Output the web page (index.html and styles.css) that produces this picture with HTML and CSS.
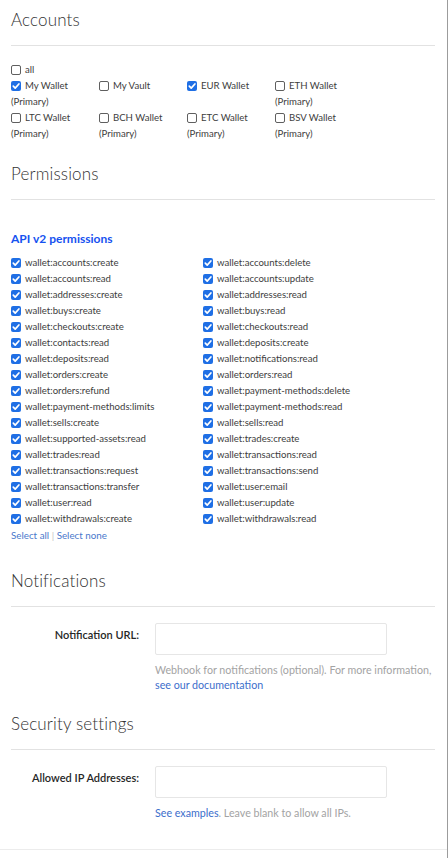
FILE: index.html
```html
<!DOCTYPE html>
<html lang="en">
<head>
<meta charset="utf-8">
<title>API key settings</title>
<link rel="stylesheet" href="styles.css">
</head>
<body>
<div class="page">
  <div class="content">
    <section class="section section-accounts">
      <h2 class="section-title">Accounts</h2>
      <hr class="rule">
      <div class="section-body">
        <div class="check-row"><span class="box"></span><span class="check-text">all</span></div>
        <div class="account-grid">
          <div class="check-row"><span class="box checked"><svg viewBox="0 0 10 10"><polyline points="2.3,5.2 4.2,7.1 7.9,3"/></svg></span><span class="check-text">My Wallet</span><span class="primary">(Primary)</span></div>
          <div class="check-row"><span class="box"></span><span class="check-text">My Vault</span></div>
          <div class="check-row"><span class="box checked"><svg viewBox="0 0 10 10"><polyline points="2.3,5.2 4.2,7.1 7.9,3"/></svg></span><span class="check-text">EUR Wallet</span></div>
          <div class="check-row"><span class="box"></span><span class="check-text">ETH Wallet</span><span class="primary">(Primary)</span></div>
          <div class="check-row"><span class="box"></span><span class="check-text">LTC Wallet</span><span class="primary">(Primary)</span></div>
          <div class="check-row"><span class="box"></span><span class="check-text">BCH Wallet</span><span class="primary">(Primary)</span></div>
          <div class="check-row"><span class="box"></span><span class="check-text">ETC Wallet</span><span class="primary">(Primary)</span></div>
          <div class="check-row"><span class="box"></span><span class="check-text">BSV Wallet</span><span class="primary">(Primary)</span></div>
        </div>
      </div>
    </section>

    <section class="section section-permissions">
      <h2 class="section-title">Permissions</h2>
      <hr class="rule">
      <div class="section-body">
        <h3 class="api-title">API v2 permissions</h3>
        <div class="perm-grid" id="perm-grid"></div>
        <div class="select-links"><a href="#">Select all</a> <span class="sep">|</span> <a href="#">Select none</a></div>
      </div>
    </section>

    <section class="section">
      <h2 class="section-title">Notifications</h2>
      <hr class="rule">
      <div class="section-body">
        <div class="form-row">
          <label class="form-label">Notification URL:</label>
          <div class="form-field">
            <div class="text-input"></div>
            <p class="help">Webhook for notifications (optional). For more information,<br><a href="#">see our documentation</a></p>
          </div>
        </div>
      </div>
    </section>

    <section class="section">
      <h2 class="section-title">Security settings</h2>
      <hr class="rule">
      <div class="section-body">
        <div class="form-row">
          <label class="form-label">Allowed IP Addresses:</label>
          <div class="form-field">
            <div class="text-input"></div>
            <p class="help"><a href="#">See examples</a>. Leave blank to allow all IPs.</p>
          </div>
        </div>
      </div>
    </section>
  </div>
  <div class="footer"></div>
</div>
<script src="app.js"></script>
</body>
</html>
```
FILE: app.js
```js
var perms = [
  "wallet:accounts:create","wallet:accounts:delete",
  "wallet:accounts:read","wallet:accounts:update",
  "wallet:addresses:create","wallet:addresses:read",
  "wallet:buys:create","wallet:buys:read",
  "wallet:checkouts:create","wallet:checkouts:read",
  "wallet:contacts:read","wallet:deposits:create",
  "wallet:deposits:read","wallet:notifications:read",
  "wallet:orders:create","wallet:orders:read",
  "wallet:orders:refund","wallet:payment-methods:delete",
  "wallet:payment-methods:limits","wallet:payment-methods:read",
  "wallet:sells:create","wallet:sells:read",
  "wallet:supported-assets:read","wallet:trades:create",
  "wallet:trades:read","wallet:transactions:read",
  "wallet:transactions:request","wallet:transactions:send",
  "wallet:transactions:transfer","wallet:user:email",
  "wallet:user:read","wallet:user:update",
  "wallet:withdrawals:create","wallet:withdrawals:read"
];
var grid = document.getElementById("perm-grid");
var html = "";
for (var i = 0; i < perms.length; i++) {
  html += '<div class="check-row"><span class="box checked"><svg viewBox="0 0 10 10"><polyline points="2.3,5.2 4.2,7.1 7.9,3"/></svg></span><span class="check-text">' + perms[i] + '</span></div>';
}
grid.innerHTML = html;
```
FILE: styles.css
```css
html, body {
  margin: 0;
  padding: 0;
  background: #ffffff;
}
body {
  font-family: Lato, "Open Sans", "Liberation Sans", sans-serif;
  color: #3a3a3a;
}
.page {
  width: 448px;
  min-height: 858px;
  box-sizing: border-box;
  border-right: 1px solid #9c9c9c;
  display: flex;
  flex-direction: column;
}
.content {
  padding: 10px 12px 0 11px;
  flex: 0 0 auto;
}
.section + .section {
  margin-top: 22px;
}
.section-permissions {
  padding-bottom: 6px;
}
.section-title {
  margin: 0 0 15px;
  font-size: 17px;
  line-height: 20px;
  font-weight: 300;
  color: #333333;
  letter-spacing: 0.15px;
}
.rule {
  margin: 0;
  border: 0;
  border-top: 1px solid #e2e2e2;
}
.section-body {
  padding-top: 16px;
}
.check-row {
  font-size: 9.6px;
  line-height: 16px;
  color: #3d3d3d;
  display: flex;
  flex-wrap: wrap;
  align-items: center;
}
.box {
  width: 10px;
  height: 10px;
  box-sizing: border-box;
  border: 1px solid #5f5f5f;
  border-radius: 2px;
  margin-right: 4px;
  background: #fff;
  display: block;
  flex: 0 0 auto;
}
.box.checked {
  background: #1f6fe5;
  border: 0;
}
.box svg {
  display: block;
  width: 10px;
  height: 10px;
  fill: none;
  stroke: #ffffff;
  stroke-width: 1.7;
  stroke-linecap: round;
  stroke-linejoin: round;
}
.primary {
  flex-basis: 100%;
}
.account-grid {
  display: grid;
  grid-template-columns: repeat(4, 88px);
  align-items: start;
}
.api-title {
  margin: 15px 0 8px;
  font-size: 12px;
  line-height: 16px;
  font-weight: 700;
  color: #1652f0;
}
.perm-grid {
  display: grid;
  grid-template-columns: 192px 192px;
}
.select-links {
  font-size: 9.8px;
  line-height: 16px;
}
.select-links a {
  color: #4a78cc;
  text-decoration: none;
}
.select-links .sep {
  color: #c4c4c4;
}
.form-row {
  display: flex;
  align-items: flex-start;
}
.form-label {
  width: 128px;
  flex: 0 0 128px;
  text-align: right;
  padding-top: 4px;
  font-size: 11px;
  line-height: 16px;
  font-weight: 600;
  color: #262626;
  margin-right: 16px;
}
.form-field {
  flex: 1 1 auto;
}
.text-input {
  width: 232px;
  height: 32px;
  box-sizing: border-box;
  border: 1px solid #e6e6e6;
  border-radius: 2px;
  background: #fff;
}
.help {
  margin: 7px 0 0;
  font-size: 10.7px;
  line-height: 15px;
  color: #a3a3a3;
  white-space: nowrap;
}
.help a {
  color: #3c6ecb;
  text-decoration: none;
}
.footer {
  margin-top: 29px;
  border-top: 1px solid #ececec;
  flex: 1 1 auto;
}
```
